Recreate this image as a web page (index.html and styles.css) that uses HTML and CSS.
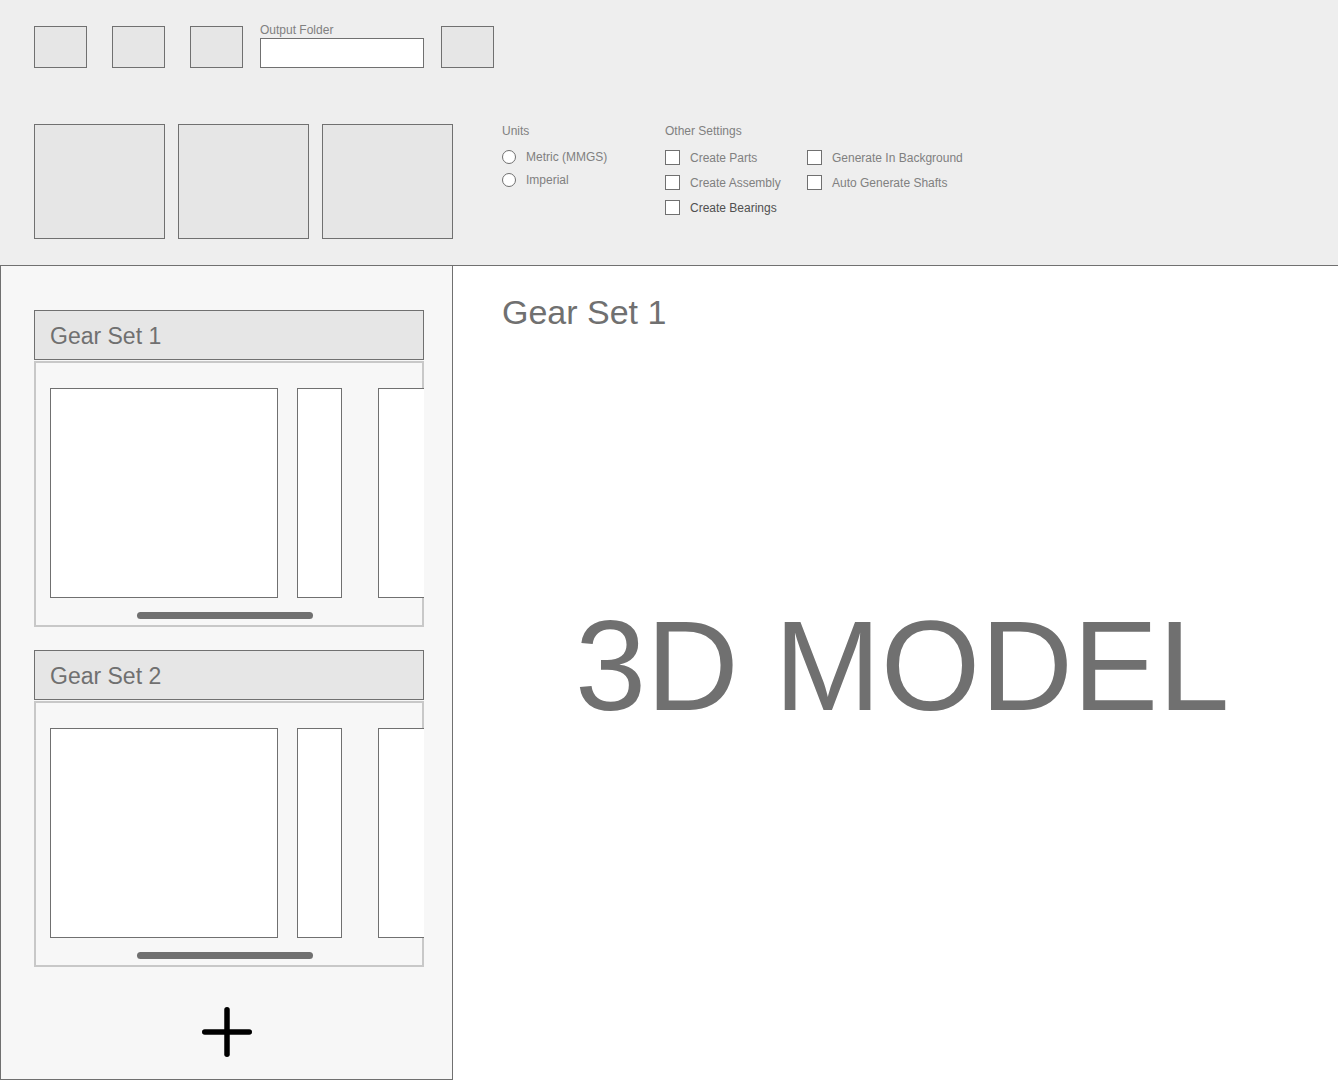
FILE: index.html
```html
<!DOCTYPE html>
<html>
<head>
<meta charset="utf-8">
<title>Gear Generator</title>
<link rel="stylesheet" href="styles.css">
</head>
<body>
<div class="app">
  <header class="topbar">
    <div class="row-one">
      <div class="tool-btn"></div>
      <div class="tool-btn"></div>
      <div class="tool-btn"></div>
      <div class="field">
        <label class="small-label">Output Folder</label>
        <div class="text-input"></div>
      </div>
      <div class="tool-btn"></div>
    </div>
    <div class="row-two">
      <div class="big-btns">
        <div class="big-btn"></div>
        <div class="big-btn"></div>
        <div class="big-btn"></div>
      </div>
      <div class="group units">
        <div class="small-label">Units</div>
        <div class="radio-list">
          <div class="radio-row"><span class="radio"></span><span class="opt">Metric (MMGS)</span></div>
          <div class="radio-row"><span class="radio"></span><span class="opt">Imperial</span></div>
        </div>
      </div>
      <div class="group other">
        <div class="small-label">Other Settings</div>
        <div class="check-cols">
          <div class="check-col first">
            <div class="check-row"><span class="check"></span><span class="opt">Create Parts</span></div>
            <div class="check-row"><span class="check"></span><span class="opt">Create Assembly</span></div>
            <div class="check-row"><span class="check"></span><span class="opt dark">Create Bearings</span></div>
          </div>
          <div class="check-col">
            <div class="check-row"><span class="check"></span><span class="opt">Generate In Background</span></div>
            <div class="check-row"><span class="check"></span><span class="opt">Auto Generate Shafts</span></div>
          </div>
        </div>
      </div>
    </div>
  </header>
  <div class="main">
    <aside class="sidebar">
      <section class="card">
        <div class="card-head">Gear Set 1</div>
        <div class="card-body">
          <div class="strip">
            <div class="pane wide"></div>
            <div class="pane narrow"></div>
            <div class="pane cut"></div>
          </div>
          <div class="scroll-thumb"></div>
        </div>
      </section>
      <section class="card">
        <div class="card-head">Gear Set 2</div>
        <div class="card-body">
          <div class="strip">
            <div class="pane wide"></div>
            <div class="pane narrow"></div>
            <div class="pane cut"></div>
          </div>
          <div class="scroll-thumb"></div>
        </div>
      </section>
      <div class="add">
        <svg width="50" height="50" viewBox="0 0 50 50" aria-label="Add gear set">
          <line x1="2.75" y1="25" x2="47.25" y2="25" stroke="#000" stroke-width="5.5" stroke-linecap="round"/>
          <line x1="25" y1="2.75" x2="25" y2="47.25" stroke="#000" stroke-width="5.5" stroke-linecap="round"/>
        </svg>
      </div>
    </aside>
    <main class="viewer">
      <h1 class="view-title">Gear Set 1</h1>
      <div class="model">3D MODEL</div>
    </main>
  </div>
</div>
</body>
</html>
```
FILE: styles.css
```css
* { box-sizing: border-box; }
html, body {
  margin: 0;
  padding: 0;
  background: #ffffff;
  font-family: "Liberation Sans", Arial, sans-serif;
}
.app {
  width: 1338px;
  height: 1080px;
  overflow: hidden;
  display: flex;
  flex-direction: column;
}
.topbar {
  height: 266px;
  flex-shrink: 0;
  background: #eeeeee;
  border-bottom: 1px solid #707070;
  padding: 23px 0 0 34px;
}
.row-one {
  display: flex;
  align-items: flex-end;
}
.tool-btn {
  width: 53px;
  height: 42px;
  background: #e6e6e6;
  border: 1px solid #707070;
  margin-right: 25px;
}
.row-one .field { margin-left: -8px; margin-right: 17px; }
.small-label {
  display: block;
  font-size: 12px;
  line-height: 14px;
  height: 14px;
  color: #808080;
}
.text-input {
  width: 164px;
  height: 30px;
  margin-top: 1px;
  background: #ffffff;
  border: 1px solid #707070;
}
.row-two {
  display: flex;
  align-items: flex-start;
  margin-top: 56px;
}
.big-btns {
  display: flex;
  gap: 13px;
}
.big-btn {
  width: 131px;
  height: 115px;
  background: #e6e6e6;
  border: 1px solid #707070;
}
.group { display: flex; flex-direction: column; }
.units { margin-left: 49px; width: 163px; }
.radio-list { margin-top: 7px; }
.radio-row, .check-row {
  display: flex;
  align-items: center;
  font-size: 12px;
  color: #808080;
}
.radio-row { height: 23px; }
.radio {
  width: 14px;
  height: 14px;
  border-radius: 50%;
  border: 1px solid #707070;
  background: #ffffff;
  margin-right: 10px;
  flex-shrink: 0;
}
.check-cols { display: flex; margin-top: 7px; }
.check-col.first { width: 142px; }
.check-row { height: 25px; }
.check {
  width: 15px;
  height: 15px;
  border: 1px solid #707070;
  background: #ffffff;
  margin-right: 10px;
  flex-shrink: 0;
}
.opt { line-height: 14px; }
.opt.dark { color: #505050; }

.main {
  flex: 1;
  display: flex;
}
.sidebar {
  width: 453px;
  height: 814px;
  flex-shrink: 0;
  background: #f7f7f7;
  border-left: 1px solid #707070;
  border-right: 1px solid #707070;
  border-bottom: 1px solid #707070;
  padding: 44px 0 0 33px;
}
.card { width: 390px; margin-bottom: 23px; }
.card-head {
  height: 50px;
  background: #e6e6e6;
  border: 1px solid #707070;
  padding: 3px 0 0 15px;
  font-size: 23px;
  line-height: 44px;
  color: #707070;
}
.card-body {
  margin-top: 1px;
  border: 2px solid #c8c8c8;
  background: #f7f7f7;
  padding-bottom: 6px;
}
.strip {
  display: flex;
  overflow: hidden;
  margin-right: -2px;
  padding: 25px 0 0 14px;
}
.pane {
  height: 210px;
  background: #ffffff;
  border: 1px solid #707070;
  flex-shrink: 0;
}
.pane.wide { width: 228px; }
.pane.narrow { width: 45px; margin-left: 19px; }
.pane.cut { width: 70px; margin-left: 36px; }
.scroll-thumb {
  width: 176px;
  height: 7px;
  margin: 14px 0 0 101px;
  border-radius: 4px;
  background: #707070;
}
.add {
  display: flex;
  justify-content: center;
  margin: 40px 0 0 -33px;
}
.add svg { display: block; }

.viewer {
  flex: 1;
  background: #ffffff;
  padding: 26px 0 0 49px;
}
.view-title {
  margin: 0;
  font-weight: normal;
  font-size: 34px;
  line-height: 40px;
  color: #707070;
}
.model {
  margin: 270px 0 0 73px;
  font-size: 128px;
  line-height: 128px;
  color: #707070;
  white-space: nowrap;
}
```
